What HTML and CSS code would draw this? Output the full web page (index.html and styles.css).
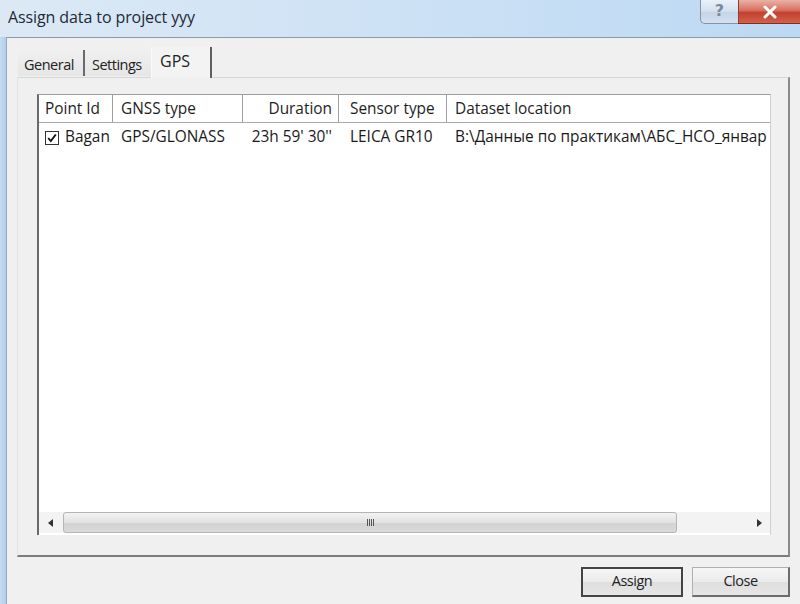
FILE: index.html
```html
<!DOCTYPE html>
<html>
<head>
<meta charset="utf-8">
<link rel="stylesheet" href="styles.css">
</head>
<body>
<div class="window">
  <div class="titlebar">
    <div class="title">Assign data to project yyy</div>
    <div class="caption">
      <div class="cap-help">?</div>
      <div class="cap-close">
        <svg width="16" height="14" viewBox="0 0 16 14"><path d="M3 2 L13 12 M13 2 L3 12" stroke="#fff" stroke-width="3" stroke-linecap="round"/></svg>
      </div>
    </div>
  </div>
  <div class="frame">
    <div class="leftframe"></div>
    <div class="client">
      <div class="tabs">
        <div class="tab">General</div>
        <div class="tab second">Settings</div>
        <div class="tab active">GPS</div>
      </div>
      <div class="panel">
        <div class="list">
          <div class="lhead">
            <div class="hc c1">Point Id</div>
            <div class="hc c2">GNSS type</div>
            <div class="hc c3">Duration</div>
            <div class="hc c4">Sensor type</div>
            <div class="hc c5">Dataset location</div>
          </div>
          <div class="lrow">
            <div class="rc c1"><span class="chk"><svg width="12" height="12" viewBox="0 0 12 12"><path d="M2.2 6 L4.8 9 L9.8 2.5" fill="none" stroke="#111" stroke-width="1.9"/></svg></span>Bagan</div>
            <div class="rc c2">GPS/GLONASS</div>
            <div class="rc c3">23h 59' 30''</div>
            <div class="rc c4">LEICA GR10</div>
            <div class="rc c5">B:\Данные по практикам\АБС_НСО_январ</div>
          </div>
          <div class="lbody"></div>
          <div class="hscroll">
            <div class="arrow left"><svg width="6" height="8" viewBox="0 0 6 8"><path d="M5 0 L0 4 L5 8 Z" fill="#333"/></svg></div>
            <div class="thumb"><span class="grip"></span></div>
            <div class="track"></div>
            <div class="arrow right"><svg width="6" height="8" viewBox="0 0 6 8"><path d="M1 0 L6 4 L1 8 Z" fill="#333"/></svg></div>
          </div>
        </div>
      </div>
      <div class="buttons">
        <div class="btn default">Assign</div>
        <div class="btn">Close</div>
      </div>
    </div>
  </div>
</div>
</body>
</html>
```
FILE: styles.css
```css
html, body {
  margin: 0;
  padding: 0;
}
body {
  width: 800px;
  height: 604px;
  overflow: hidden;
  background: #f0f0f0;
  font-family: "Open Sans", "Noto Sans", sans-serif;
  color: #1a1a1a;
}
.window {
  display: flex;
  flex-direction: column;
  height: 604px;
}
.titlebar {
  height: 37px;
  display: flex;
  align-items: flex-start;
  background: linear-gradient(to right, #dce9f5 0%, #d0e3f5 40%, #bcd9f3 100%);
}
.title {
  padding: 6px 0 0 8px;
  font-size: 16px;
  color: #1d2a36;
  letter-spacing: -0.1px;
}
.caption {
  margin-left: auto;
  display: flex;
  height: 24px;
}
.cap-help {
  width: 37px;
  height: 23px;
  border: 1px solid #8595a8;
  border-top: none;
  border-right: none;
  border-radius: 0 0 0 5px;
  background: linear-gradient(to bottom, #e9f1f9, #d3e0ee 50%, #c3d4e6 51%, #d3e1ef);
  font-family: "DejaVu Sans", sans-serif;
  font-weight: bold;
  font-size: 16px;
  color: #7b8a9b;
  text-align: center;
  line-height: 22px;
}
.cap-close {
  width: 61px;
  height: 23px;
  border-bottom: 1px solid #7a2f28;
  border-left: 1px solid #8d3d34;
  background: linear-gradient(to bottom, #eab2a6, #d7705f 45%, #c4402e 55%, #d1624a);
  display: flex;
  align-items: center;
  justify-content: center;
}
.frame {
  flex: 1;
  display: flex;
}
.leftframe {
  width: 6px;
  background: linear-gradient(to right, #c4dcf1, #b2cfea);
}
.client {
  flex: 1;
  border-top: 1px solid #8d9aa6;
  border-left: 1px solid #9aa8b5;
  padding: 9px 10px 0 10px;
  display: flex;
  flex-direction: column;
}
.tabs {
  display: flex;
  align-items: flex-end;
  height: 30px;
  padding-left: 1px;
  position: relative;
  z-index: 1;
}
.tab {
  font-size: 14.5px;
  letter-spacing: -0.5px;
  color: #222;
  height: 26px;
  line-height: 29px;
  padding: 0 6px;
  background: linear-gradient(to bottom, #f0f0f0, #e6e6e6);
  box-sizing: border-box;
  margin-bottom: 1px;
  width: 67px;
  border-right: 2px solid #6a6a6a;
}
.tab.second {
  width: 66px;
  border-right: none;
  padding-left: 7px;
}
.tab.active {
  height: 31px;
  line-height: 28px;
  width: 61px;
  padding-left: 8px;
  background: #f3f3f3;
  margin-bottom: -1px;
  border-right: 2px solid #606060;
  border-left: 1px solid #fafafa;
  font-size: 16px;
  letter-spacing: 0;
}
.panel {
  height: 480px;
  box-sizing: border-box;
  border-top: 1px solid #d6d6d6;
  border-left: 1px solid #e2e2e2;
  border-right: 2px solid #8a8a8a;
  border-bottom: 2px solid #7c7c7c;
  padding: 16px 17px 20px 19px;
  display: flex;
}
.list {
  flex: 1;
  min-width: 0;
  background: #fff;
  border-top: 1px solid #9c9c9c;
  border-left: 2px solid #6a6a6a;
  border-right: 1px solid #d0d0d0;
  display: flex;
  flex-direction: column;
  overflow: hidden;
}
.lhead, .lrow {
  display: grid;
  grid-template-columns: 74px 130px 96px 108px 1fr;
  font-size: 15.4px;
  white-space: nowrap;
}
.lhead {
  height: 27px;
  border-bottom: 1px solid #a8a8a8;
}
.hc {
  border-right: 1px solid #a0a0a0;
  line-height: 27px;
  color: #1e1e1e;
  overflow: hidden;
}
.hc.c5 {
  border-right: none;
}
.c1 { padding-left: 6px; }
.c2 { padding-left: 8px; }
.c3 { text-align: right; padding-right: 6px; }
.c4 { padding-left: 11px; }
.c5 { padding-left: 8px; overflow: hidden; }
.lrow {
  height: 22px;
  margin-top: 3px;
  line-height: 22px;
  color: #1a1a1a;
}
.rc {
  overflow: hidden;
}
.rc.c3 {
  padding-right: 7px;
}
.chk {
  display: inline-flex;
  align-items: center;
  justify-content: center;
  width: 12px;
  height: 12px;
  border: 1px solid #333;
  vertical-align: -2px;
  margin-right: 6px;
  margin-left: 0;
  background: #fff;
}
.lbody {
  flex: 1;
}
.hscroll {
  height: 21px;
  display: flex;
  background: #f3f3f3;
  margin-bottom: 2px;
}
.arrow {
  width: 24px;
  display: flex;
  align-items: center;
  justify-content: center;
}
.arrow.right {
  width: 22px;
}
.thumb {
  width: 614px;
  box-sizing: border-box;
  border: 1px solid #b5b5b5;
  border-radius: 3px;
  background: linear-gradient(to bottom, #f2f2f2, #e2e2e2 50%, #d2d2d2 51%, #dadada);
  display: flex;
  align-items: center;
  justify-content: center;
}
.grip {
  width: 7px;
  height: 7px;
  background: repeating-linear-gradient(to right, #555 0, #555 1px, transparent 1px, transparent 2px);
}
.track {
  flex: 1;
}
.buttons {
  display: flex;
  justify-content: flex-end;
  gap: 9px;
  margin-top: 10px;
}
.btn {
  height: 30px;
  box-sizing: border-box;
  font-size: 14.5px;
  letter-spacing: -0.5px;
  color: #222;
  display: flex;
  align-items: center;
  justify-content: center;
  padding-bottom: 3px;
  background: linear-gradient(to bottom, #f6f6f6, #ebebeb 50%, #dedede 51%, #e6e6e6);
  border: 1px solid #b0b0b0;
  border-right: 2px solid #6c6c6c;
  border-bottom: 2px solid #6c6c6c;
}
.btn.default {
  width: 102px;
  border: 2px solid #444;
}
.btn:last-child {
  width: 98px;
}
```
